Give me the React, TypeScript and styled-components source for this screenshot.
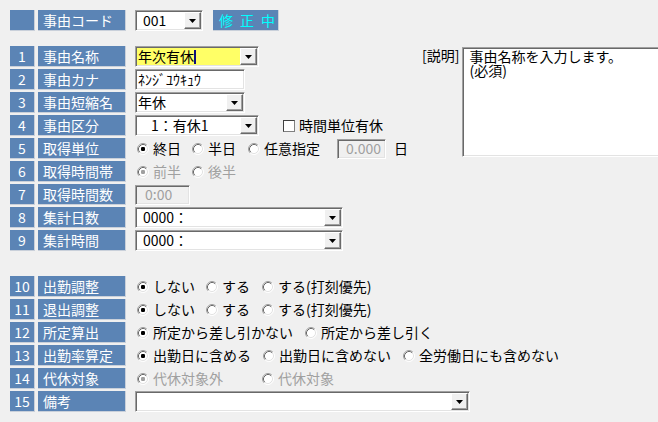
import React from "react";
import styled, { createGlobalStyle } from "styled-components";

const GlobalStyle = createGlobalStyle`
  html, body { margin: 0; padding: 0; background: #f0f0f0; overflow: hidden; }
  body {
    font-family: "Noto Sans CJK JP", "Noto Sans", sans-serif;
    font-size: 14px;
    color: #000;
  }
`;

const BLUE = "#5b84b5";

const Page = styled.div`
  width: 658px;
  height: 422px;
  box-sizing: border-box;
  padding: 10px 0 0 10px;
  overflow: hidden;
`;

const Row = styled.div`
  display: flex;
  align-items: center;
  height: 21px;
  flex-shrink: 0;
`;

const Section = styled.div<{ $top: number }>`
  display: flex;
  flex-direction: column;
  gap: 2px;
  margin-top: ${(p) => p.$top}px;
`;

const TopArea = styled.div`
  display: flex;
  align-items: flex-start;
  margin-top: 15px;
`;

const FormColumn = styled(Section)`
  width: 412px;
  flex-shrink: 0;
`;

const NumCell = styled.div`
  width: 25px;
  height: 21px;
  box-sizing: border-box;
  background: ${BLUE};
  color: #fff;
  display: flex;
  align-items: center;
  justify-content: center;
  border-right: 1px solid #c9d0da;
  border-bottom: 1px solid #c9d0da;
  line-height: 1;
  font-size: 14px;
  white-space: nowrap;
  flex-shrink: 0;
`;

const LabelCell = styled(NumCell)`
  width: 88px;
  margin-left: 3px;
  justify-content: flex-start;
  padding-left: 5px;
`;

const StatusBox = styled(NumCell)`
  width: 66px;
  margin-left: 10px;
  justify-content: flex-start;
  padding-left: 6px;
  color: #00ffff;
  letter-spacing: 7px;
  overflow: visible;
`;

const Controls = styled.div`
  display: flex;
  align-items: center;
  margin-left: 9px;
  height: 21px;
`;

const Sunken = styled.div<{ $w: number; $h?: number; $bg?: string }>`
  width: ${(p) => p.$w}px;
  height: ${(p) => p.$h ?? 21}px;
  box-sizing: border-box;
  background: ${(p) => p.$bg ?? "#fff"};
  border: 1px solid;
  border-color: #a0a0a0 #ffffff #ffffff #a0a0a0;
  box-shadow: inset 1px 1px 0 #696969, inset -1px -1px 0 #e3e3e3;
  display: flex;
  align-items: center;
  padding: 1px;
  flex-shrink: 0;
`;

const FieldText = styled.span<{ $pad?: number; $color?: string; $align?: string }>`
  flex: 1;
  padding-left: ${(p) => p.$pad ?? 1}px;
  padding-right: 3px;
  white-space: pre;
  line-height: 17px;
  color: ${(p) => p.$color ?? "#000"};
  display: flex;
  align-items: center;
  justify-content: ${(p) => (p.$align === "right" ? "flex-end" : "flex-start")};
`;

const Caret = styled.span`
  display: inline-block;
  width: 2px;
  height: 14px;
  background: #10107a;
`;

const DropButton = styled.div`
  width: 17px;
  height: 17px;
  box-sizing: border-box;
  background: #f0f0f0;
  border: 1px solid;
  border-color: #ffffff #696969 #696969 #ffffff;
  box-shadow: inset -1px -1px 0 #a0a0a0;
  display: flex;
  align-items: center;
  justify-content: center;
  flex-shrink: 0;
`;

const Arrow = () => (
  <svg width="7" height="4" viewBox="0 0 7 4">
    <polygon points="0,0 7,0 3.5,4" fill="#000" />
  </svg>
);

const Combo = ({
  w,
  value,
  bg,
  pad,
  caret,
}: {
  w: number;
  value?: string;
  bg?: string;
  pad?: number;
  caret?: boolean;
}) => (
  <Sunken $w={w} $bg={bg}>
    <FieldText $pad={pad}>
      {value}
      {caret && <Caret />}
    </FieldText>
    <DropButton>
      <Arrow />
    </DropButton>
  </Sunken>
);

const RadioWrap = styled.div`
  display: flex;
  align-items: center;
  padding-left: 2px;
`;

const Option = styled.div<{ $w?: number; $disabled?: boolean }>`
  display: flex;
  align-items: center;
  gap: 4px;
  width: ${(p) => (p.$w ? `${p.$w}px` : "auto")};
  flex-shrink: 0;
  white-space: nowrap;
  line-height: 17px;
  color: ${(p) => (p.$disabled ? "#a0a0a0" : "#000")};
`;

const RadioIcon = ({ checked, disabled }: { checked?: boolean; disabled?: boolean }) => (
  <svg width="12" height="12" viewBox="0 0 12 12" style={{ flexShrink: 0 }}>
    <circle cx="6" cy="6" r="5" fill="#fff" />
    <path d="M2.11 9.89 A5.5 5.5 0 0 1 9.89 2.11" stroke="#a0a0a0" strokeWidth="1" fill="none" />
    <path d="M9.89 2.11 A5.5 5.5 0 0 1 2.11 9.89" stroke="#ffffff" strokeWidth="1" fill="none" />
    <path d="M2.82 9.18 A4.5 4.5 0 0 1 9.18 2.82" stroke="#696969" strokeWidth="1" fill="none" />
    <path d="M9.18 2.82 A4.5 4.5 0 0 1 2.82 9.18" stroke="#e3e3e3" strokeWidth="1" fill="none" />
    {checked && <rect x="4" y="4" width="4" height="4" rx="1.2" fill={disabled ? "#a0a0a0" : "#000"} />}
  </svg>
);

type Opt = { label: string; w?: number; checked?: boolean };

const RadioGroup = ({ options, disabled }: { options: Opt[]; disabled?: boolean }) => (
  <RadioWrap>
    {options.map((o) => (
      <Option key={o.label} $w={o.w} $disabled={disabled}>
        <RadioIcon checked={o.checked} disabled={disabled} />
        <span>{o.label}</span>
      </Option>
    ))}
  </RadioWrap>
);

const CheckBox = styled.span`
  width: 12px;
  height: 12px;
  box-sizing: border-box;
  background: #fff;
  border: 1px solid;
  border-color: #404040 #808080 #808080 #404040;
  margin-left: 24px;
  flex-shrink: 0;
`;

const CheckLabel = styled.span`
  margin-left: 4px;
  line-height: 17px;
  white-space: nowrap;
`;

const UnitText = styled.span`
  margin-left: 8px;
  line-height: 17px;
`;

const Aside = styled.div`
  display: flex;
  align-items: flex-start;
  gap: 3px;
  margin-top: 1px;
`;

const DescLabel = styled.span`
  line-height: 16px;
  white-space: nowrap;
`;

const DescBox = styled.div`
  width: 200px;
  height: 110px;
  box-sizing: border-box;
  background: #fff;
  border: 1px solid;
  border-color: #a0a0a0 #ffffff #ffffff #a0a0a0;
  box-shadow: inset 1px 1px 0 #696969, inset -1px -1px 0 #e3e3e3;
  padding: 1px 6px;
  line-height: 14px;
  font-size: 14px;
`;

const FormRow = ({ n, label, children }: { n: number; label: string; children?: React.ReactNode }) => (
  <Row>
    <NumCell>{n}</NumCell>
    <LabelCell>{label}</LabelCell>
    <Controls>{children}</Controls>
  </Row>
);

export default function App() {
  return (
    <>
      <GlobalStyle />
      <Page>
        <Row>
          <NumCell />
          <LabelCell>事由コード</LabelCell>
          <Controls>
            <Combo w={68} value="001" pad={6} />
            <StatusBox>修正中</StatusBox>
          </Controls>
        </Row>

        <TopArea>
          <FormColumn $top={0}>
            <FormRow n={1} label="事由名称">
              <Combo w={124} value="年次有休" bg="#ffff66" pad={1} caret />
            </FormRow>
            <FormRow n={2} label="事由カナ">
              <Sunken $w={110}>
                <FieldText $pad={1}>ﾈﾝｼﾞﾕｳｷｭｳ</FieldText>
              </Sunken>
            </FormRow>
            <FormRow n={3} label="事由短縮名">
              <Combo w={110} value="年休" pad={1} />
            </FormRow>
            <FormRow n={4} label="事由区分">
              <Combo w={124} value="1：有休1" pad={14} />
              <CheckBox />
              <CheckLabel>時間単位有休</CheckLabel>
            </FormRow>
            <FormRow n={5} label="取得単位">
              <RadioGroup
                options={[
                  { label: "終日", w: 55, checked: true },
                  { label: "半日", w: 56 },
                  { label: "任意指定", w: 89 },
                ]}
              />
              <Sunken $w={49} $h={20} $bg="#f0f0f0">
                <FieldText $color="#a0a0a0" $align="right">0.000</FieldText>
              </Sunken>
              <UnitText>日</UnitText>
            </FormRow>
            <FormRow n={6} label="取得時間帯">
              <RadioGroup
                disabled
                options={[
                  { label: "前半", w: 55, checked: true },
                  { label: "後半" },
                ]}
              />
            </FormRow>
            <FormRow n={7} label="取得時間数">
              <Sunken $w={55} $h={20} $bg="#f0f0f0">
                <FieldText $color="#a0a0a0" $pad={8}>0:00</FieldText>
              </Sunken>
            </FormRow>
            <FormRow n={8} label="集計日数">
              <Combo w={208} value="0000：" pad={6} />
            </FormRow>
            <FormRow n={9} label="集計時間">
              <Combo w={208} value="0000：" pad={6} />
            </FormRow>
          </FormColumn>
          <Aside>
            <DescLabel>[説明]</DescLabel>
            <DescBox>
              事由名称を入力します。
              <br />
              (必須)
            </DescBox>
          </Aside>
        </TopArea>

        <Section $top={25}>
          <FormRow n={10} label="出勤調整">
            <RadioGroup
              options={[
                { label: "しない", w: 69, checked: true },
                { label: "する", w: 56 },
                { label: "する(打刻優先)" },
              ]}
            />
          </FormRow>
          <FormRow n={11} label="退出調整">
            <RadioGroup
              options={[
                { label: "しない", w: 69, checked: true },
                { label: "する", w: 56 },
                { label: "する(打刻優先)" },
              ]}
            />
          </FormRow>
          <FormRow n={12} label="所定算出">
            <RadioGroup
              options={[
                { label: "所定から差し引かない", w: 168, checked: true },
                { label: "所定から差し引く" },
              ]}
            />
          </FormRow>
          <FormRow n={13} label="出勤率算定">
            <RadioGroup
              options={[
                { label: "出勤日に含める", w: 126, checked: true },
                { label: "出勤日に含めない", w: 140 },
                { label: "全労働日にも含めない" },
              ]}
            />
          </FormRow>
          <FormRow n={14} label="代休対象">
            <RadioGroup
              disabled
              options={[
                { label: "代休対象外", w: 125, checked: true },
                { label: "代休対象" },
              ]}
            />
          </FormRow>
          <FormRow n={15} label="備考">
            <Combo w={335} />
          </FormRow>
        </Section>
      </Page>
    </>
  );
}
